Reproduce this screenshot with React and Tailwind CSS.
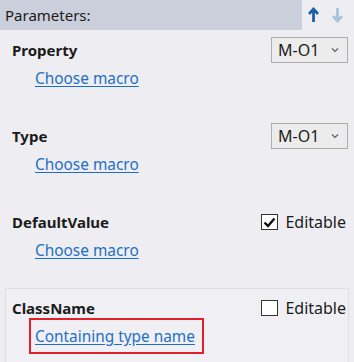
import React from "react";

const font = { fontFamily: '"Noto Sans", "Open Sans", sans-serif' };

function UpArrow({ color }) {
  return (
    <svg width="11" height="16" viewBox="0 0 11 16">
      <path d="M5.5 2.5 L5.5 15" stroke={color} strokeWidth="2.8" fill="none" />
      <path d="M1 7 L5.5 2 L10 7" stroke={color} strokeWidth="2.8" fill="none" />
    </svg>
  );
}

function DownArrow({ color }) {
  return (
    <svg width="11" height="16" viewBox="0 0 11 16">
      <path d="M5.5 1 L5.5 13.5" stroke={color} strokeWidth="2.8" fill="none" />
      <path d="M1 9 L5.5 14 L10 9" stroke={color} strokeWidth="2.8" fill="none" />
    </svg>
  );
}

function Dropdown() {
  return (
    <div className="w-[77px] h-[26px] border border-[#adadad] bg-[#ececec] flex items-center pl-[6px] pr-[8px] justify-between">
      <span className="text-[16px] leading-none text-[#1b1b1b]">M-O1</span>
      <svg width="8" height="6" viewBox="0 0 8 6">
        <path d="M1 1.5 L4 4.5 L7 1.5" stroke="#606060" strokeWidth="1.2" fill="none" />
      </svg>
    </div>
  );
}

function Check({ checked }) {
  return (
    <div className="flex items-center gap-[7px] mr-[2px]">
      <div className="w-[17px] h-[16px] border border-[#333333] bg-white flex items-center justify-center">
        {checked && (
          <svg width="13" height="11" viewBox="0 0 13 11">
            <path d="M1.5 5.5 L5 9 L11.5 1.5" stroke="#111" strokeWidth="2.4" fill="none" />
          </svg>
        )}
      </div>
      <span className="text-[16px] leading-[20px] text-[#1b1b1b]">Editable</span>
    </div>
  );
}

function Section({ label, control, link, highlight, boxed }) {
  return (
    <div
      className={
        "h-[86px] mx-[5px] border " +
        (highlight ? "border-[#dfdfe6] bg-[#f0f0f4]" : "border-transparent")
      }
    >
      <div className="flex items-center justify-between h-[26px] mt-[6px] pl-[6px]">
        <span className="font-bold text-[15px] leading-[20px] text-[#1b1b1b]">{label}</span>
        {control}
      </div>
      <div className="mt-[3px] pl-[29px] h-[20px]">
        <span className="relative inline-block">
          <a className="text-[15.4px] leading-[20px] text-[#1d6fc6] underline underline-offset-2 cursor-pointer">
            {link}
          </a>
          {boxed && (
            <span className="absolute left-[-6px] right-[-9px] top-[-6px] bottom-[-6px] border-2 border-[#e3202a]" />
          )}
        </span>
      </div>
    </div>
  );
}

export default function App() {
  return (
    <div className="w-[354px] h-[362px] bg-[#eeeef2] overflow-hidden" style={font}>
      <div className="flex h-[30px]">
        <div className="w-[302px] bg-[#cbcfdc] flex items-center pl-[5px]">
          <span className="text-[15px] text-[#1b1b1b] leading-[20px]">Parameters:</span>
        </div>
        <div className="flex-1 flex items-center justify-between pl-[6px] pr-[11px]">
          <UpArrow color="#1d5fa6" />
          <DownArrow color="#a8c3df" />
        </div>
      </div>
      <Section label="Property" control={<Dropdown />} link="Choose macro" />
      <Section label="Type" control={<Dropdown />} link="Choose macro" />
      <Section label="DefaultValue" control={<Check checked />} link="Choose macro" />
      <Section label="ClassName" control={<Check checked={false} />} link="Containing type name" highlight boxed />
    </div>
  );
}
